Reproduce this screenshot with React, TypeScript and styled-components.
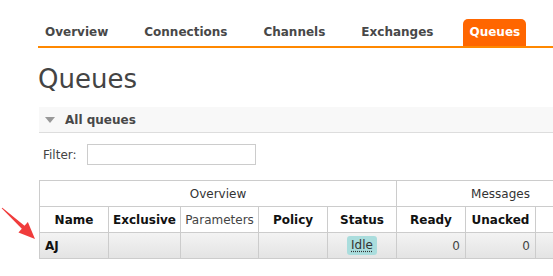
import React from 'react';
import styled, { createGlobalStyle } from 'styled-components';

const GlobalStyle = createGlobalStyle`
  html, body {
    margin: 0;
    padding: 0;
    background: #fff;
    overflow: hidden;
  }
  body {
    font-family: 'DejaVu Sans', Verdana, sans-serif;
    font-size: 12px;
    color: #444;
  }
`;

const Page = styled.div`
  position: relative;
  width: 553px;
  height: 276px;
  overflow: hidden;
  padding: 19px 0 0 38px;
  box-sizing: border-box;
`;

const Menu = styled.ul`
  display: flex;
  gap: 24px;
  margin: 0;
  padding: 0 0 0 1px;
  list-style: none;
  border-bottom: 2px solid #ff8800;
`;

const Tab = styled.li<{ $selected?: boolean }>`
  height: 27px;
  line-height: 27px;
  padding: 0 6px;
  font-weight: bold;
  color: ${(p) => (p.$selected ? '#fff' : '#484848')};
  background: ${(p) => (p.$selected ? '#ff6600' : 'transparent')};
  border-radius: 5px 5px 0 0;
`;

const Title = styled.h1`
  margin: 15px 0 0;
  height: 30px;
  line-height: 32px;
  font-size: 26px;
  font-weight: normal;
  color: #444;
`;

const Section = styled.div`
  margin: 14px 0 0 1px;
`;

const SectionHeader = styled.div`
  display: flex;
  align-items: center;
  gap: 10px;
  height: 25px;
  padding-left: 6px;
  background: #f8f8f8;
  border-bottom: 1px solid #ddd;
  font-weight: bold;
  color: #484848;
`;

const Triangle = styled.span`
  width: 0;
  height: 0;
  border-left: 5px solid transparent;
  border-right: 5px solid transparent;
  border-top: 6px solid #999;
`;

const FilterRow = styled.div`
  display: flex;
  align-items: center;
  gap: 10px;
  margin-top: 11px;
  padding-left: 4px;
`;

const FilterInput = styled.input`
  width: 169px;
  height: 21px;
  box-sizing: border-box;
  border: 1px solid #ccc;
  padding: 0 3px;
  margin: 0;
`;

const Table = styled.table`
  margin-top: 15px;
  border-collapse: collapse;
  table-layout: fixed;
  width: 565px;
  border: 1px solid #ccc;
`;

const GroupTh = styled.th`
  height: 25px;
  padding: 0;
  font-weight: normal;
  color: #333;
  text-align: center;
  border: 1px solid #ccc;
  border-top: none;
`;

const ColTh = styled.th<{ $plain?: boolean }>`
  height: 25px;
  padding: 0;
  font-weight: ${(p) => (p.$plain ? 'normal' : 'bold')};
  color: ${(p) => (p.$plain ? '#444' : '#111')};
  text-align: center;
  border: 1px solid #ccc;
  white-space: nowrap;
  overflow: hidden;
`;

const Row = styled.tr`
  background: linear-gradient(#f3f3f3, #e3e3e3);
`;

const Td = styled.td<{ $align?: 'left' | 'right' | 'center' }>`
  height: 25px;
  padding: 0 5px;
  text-align: ${(p) => p.$align || 'left'};
  border: 1px solid #ccc;
  color: #444;
`;

const QueueName = styled.span`
  font-weight: bold;
  color: #111;
`;

const StatusBadge = styled.abbr`
  display: inline-block;
  padding: 0 4px;
  line-height: 19px;
  background: #aadddd;
  border-radius: 3px;
  color: #333;
  text-decoration: underline dotted;
  text-underline-offset: 2px;
`;

const Arrow = styled.svg`
  position: absolute;
  left: 0;
  top: 200px;
`;

const tabs = ['Overview', 'Connections', 'Channels', 'Exchanges', 'Queues'];
const widths = [69, 72, 78, 69, 69, 69, 70, 69];

const App = () => {
  return (
    <Page>
      <GlobalStyle />
      <Menu>
        {tabs.map((t) => (
          <Tab key={t} $selected={t === 'Queues'}>
            {t}
          </Tab>
        ))}
      </Menu>
      <Title>Queues</Title>
      <Section>
        <SectionHeader>
          <Triangle />
          All queues
        </SectionHeader>
        <FilterRow>
          <span>Filter:</span>
          <FilterInput type="text" />
        </FilterRow>
        <Table>
          <colgroup>
            {widths.map((w, i) => (
              <col key={i} style={{ width: w }} />
            ))}
          </colgroup>
          <thead>
            <tr>
              <GroupTh colSpan={5}>Overview</GroupTh>
              <GroupTh colSpan={3}>Messages</GroupTh>
            </tr>
            <tr>
              <ColTh>Name</ColTh>
              <ColTh>Exclusive</ColTh>
              <ColTh $plain>Parameters</ColTh>
              <ColTh>Policy</ColTh>
              <ColTh>Status</ColTh>
              <ColTh>Ready</ColTh>
              <ColTh>Unacked</ColTh>
              <ColTh>Total</ColTh>
            </tr>
          </thead>
          <tbody>
            <Row>
              <Td>
                <QueueName>AJ</QueueName>
              </Td>
              <Td />
              <Td />
              <Td />
              <Td $align="center">
                <StatusBadge title="idle">Idle</StatusBadge>
              </Td>
              <Td $align="right">0</Td>
              <Td $align="right">0</Td>
              <Td $align="right">0</Td>
            </Row>
          </tbody>
        </Table>
      </Section>
      <Arrow width="40" height="45" viewBox="0 0 40 45">
        <polygon
          points="2.34,7.63 24.5,25.75 27.87,22.05 35,39 18.45,32.41 21.8,28.7 1.66,8.37"
          fill="#f03c3c"
        />
      </Arrow>
    </Page>
  );
};

export default App;
